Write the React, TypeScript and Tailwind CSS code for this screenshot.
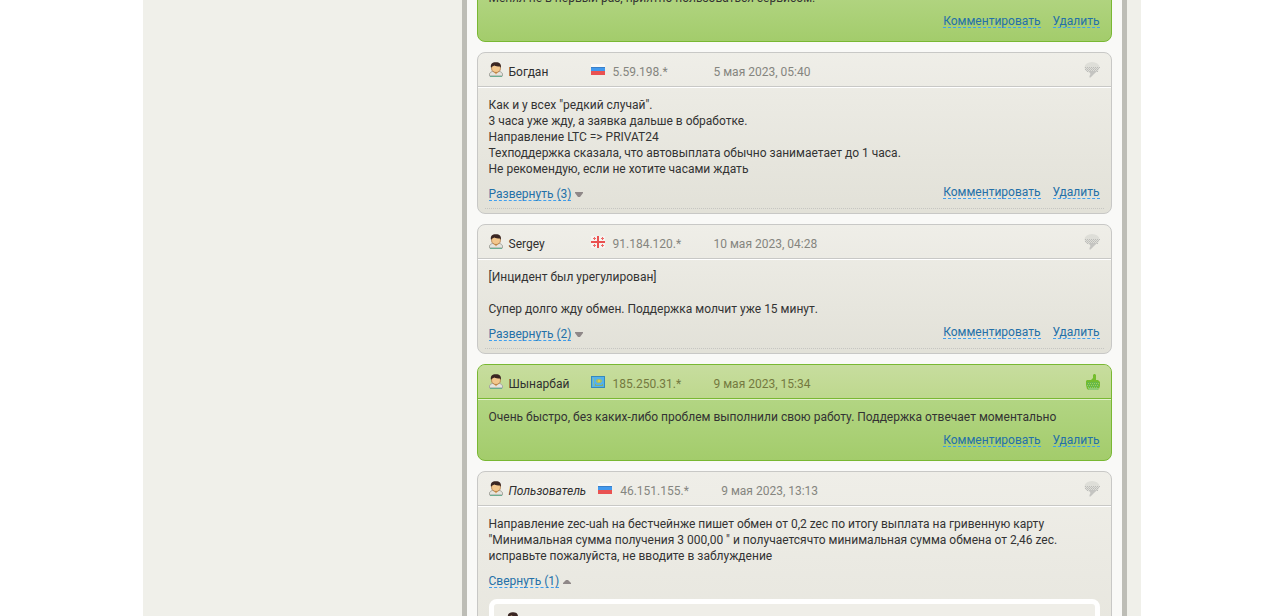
import { useState } from "react";

const reviews = [
  {
    id: 1,
    kind: "neutral",
    name: "Богдан",
    country: "ru",
    ip: "5.59.198.*",
    date: "5 мая 2023, 05:40",
    lines: [
      'Как и у всех "редкий случай".',
      "3 часа уже жду, а заявка дальше в обработке.",
      "Направление LTC => PRIVAT24",
      "Техподдержка сказала, что автовыплата обычно занимаетает до 1 часа.",
      "Не рекомендую, если не хотите часами ждать",
    ],
    replies: 3,
  },
  {
    id: 2,
    kind: "neutral",
    name: "Sergey",
    country: "ge",
    ip: "91.184.120.*",
    date: "10 мая 2023, 04:28",
    lines: ["[Инцидент был урегулирован]", "", "Супер долго жду обмен. Поддержка молчит уже 15 минут."],
    replies: 2,
  },
  {
    id: 3,
    kind: "positive",
    name: "Шынарбай",
    country: "kz",
    ip: "185.250.31.*",
    date: "9 мая 2023, 15:34",
    lines: ["Очень быстро, без каких-либо проблем выполнили свою работу. Поддержка отвечает моментально"],
    replies: 0,
  },
  {
    id: 4,
    kind: "neutral",
    name: "Пользователь",
    anonymous: true,
    country: "ru",
    ip: "46.151.155.*",
    date: "9 мая 2023, 13:13",
    lines: [
      "Направление zec-uah на бестчейнже пишет обмен от 0,2 zec по итогу выплата на гривенную карту",
      '"Минимальная сумма получения 3 000,00 " и получаетсячто минимальная сумма обмена от 2,46 zec.',
      "исправьте пожалуйста, не вводите в заблуждение",
    ],
    replies: 1,
    open: true,
  },
];

const linkClass =
  "h-[15px] cursor-pointer border-b border-dashed border-[#3f9fee] leading-4 text-[#2470a8] hover:border-transparent";

const Avatar = () => (
  <svg width="14" height="15" viewBox="0 0 14 15" className="shrink-0" aria-hidden="true">
    <path d="M.5 14V12C.7 10.4 2.5 9.7 4.2 9.2H9.8C11.5 9.7 13.3 10.4 13.5 12V14Z" fill="#e4e4df" stroke="#a9a9a2" />
    <path d="M1 14.4H13" stroke="#62ab8c" />
    <path d="M4.5 9.5 7 12.5 9.5 9.5 8.8 8H5.2Z" fill="#dda55e" />
    <path d="M2.6 4.5C2.6 2.4 4.4 1.8 7 1.8S11.4 2.4 11.4 4.5V6.8C11.4 9 9.2 10.5 7 10.5S2.6 9 2.6 6.8Z" fill="#f3c88e" stroke="#a66b35" strokeWidth=".7" />
    <path d="M2 5.8C1.2 2 3.4.3 6.6.3c3.4-.2 6 1.3 5.2 5.5L10.8 4.4C8.5 4.4 6.6 4.2 5.4 3.4L3.4 4.4Z" fill="#3a2622" />
  </svg>
);

const Flag = ({ country }: { country: string }) => {
  if (country === "kz") {
    return (
      <svg width="14" height="12" viewBox="0 0 14 12" shapeRendering="crispEdges" role="img" aria-label="Казахстан">
        <path d="M0 0H14V12H0Z" fill="#3489bd" />
        <path d="M1 1H13V11H1Z" fill="#55b2e8" />
        <path d="M2 2H3V10H2Z" fill="#86bfa0" />
        <path d="M6 3H10V4H11V6H10V7H6V6H5V4H6Z" fill="#a0bd70" />
        <path d="M7 4H9V6H7Z" fill="#d7cb4e" />
        <path d="M4 8H5V9H11V8H12V10H4Z" fill="#88b06e" />
      </svg>
    );
  }
  if (country === "ge") {
    return (
      <svg width="14" height="12" viewBox="0 0 14 12" shapeRendering="crispEdges" role="img" aria-label="Грузия">
        <path d="M0 0H14V12H0Z" fill="#f6f3f0" />
        <path d="M6 0H8V12H6ZM0 5H14V7H0Z" fill="#ea5050" />
        <path d="M3 1H4V4H3ZM2 2H5V3H2ZM11 1H12V4H11ZM10 2H13V3H10ZM3 8H4V11H3ZM2 9H5V10H2ZM11 8H12V11H11ZM10 9H13V10H10Z" fill="#ee6a68" />
      </svg>
    );
  }
  return (
    <svg width="14" height="12" viewBox="0 0 14 12" shapeRendering="crispEdges" role="img" aria-label="Россия">
      <path d="M0 0H14V3H0Z" fill="#f8f8f6" />
      <path d="M0 3H14V7H0Z" fill="#4199ee" />
      <path d="M0 3H14V4H0Z" fill="#3a7fc8" />
      <path d="M0 7H14V11H0Z" fill="#e95252" />
    </svg>
  );
};

const NeutralIcon = () => (
  <svg width="16" height="17" viewBox="0 0 16 17" role="img" aria-label="Комментарий">
    <ellipse cx="8" cy="6.5" rx="7.5" ry="5.5" fill="#deded8" />
    <path d="M1 6.5H16M1 8.5H15M3 10.5H14" stroke="#bcbcb9" strokeDasharray="1 1" />
    <path d="M2 7.5H15M2 9.5H14" stroke="#c3c3c0" strokeDasharray="1 1" />
    <path d="M5 10H13L10 13L6.5 16.5H5.5V15L6.5 13Z" fill="#c4c4c1" />
  </svg>
);

const PositiveIcon = () => (
  <svg width="14" height="16" viewBox="0 0 14 16" role="img" aria-label="Положительный отзыв">
    <path d="M1 6H5L7 4V1L8 0H9L10 1V6H12L14 8V12L13 15L11 16H3L1 15L0 11V7Z" fill="#74bd2d" />
    <path d="M1 8.5H13M1 10.5H13M2 12.5H13" stroke="#5bb562" strokeDasharray="1 1" />
    <path d="M2 9.5H13M1 11.5H13M2 13.5H12" stroke="#90cb78" strokeDasharray="1 1" />
    <path d="M2 14H13V15L11 16H3Z" fill="#8fcb74" />
  </svg>
);

const Actions = () => (
  <div className="ml-auto flex gap-3">
    <button className={linkClass}>Комментировать</button>
    <button className={linkClass}>Удалить</button>
  </div>
);

const Review = ({ review }) => {
  const [open, setOpen] = useState(!!review.open);
  const positive = review.kind === "positive";

  return (
    <article
      className={
        positive
          ? "overflow-hidden rounded-lg border border-[#79b833] bg-linear-to-b from-[#bbda90] to-[#a3cc6b]"
          : "overflow-hidden rounded-lg border border-[#c8c8c6] bg-linear-to-b from-[#efeee8] to-[#e2e1d8]"
      }
    >
      <header
        className={
          positive
            ? "flex h-[34px] items-center border-b border-[#79b833] bg-linear-to-b from-[#c7dd9e] to-[#bed88e] px-[11px] text-[#74793f]"
            : "flex h-[34px] items-center border-b border-[#c8c8c6] px-[11px] text-[#85857f]"
        }
      >
        <Avatar />
        <span className={review.anonymous ? "ml-[6px] min-w-[70px] pt-1 text-[#2f2f2f] italic" : "ml-[6px] min-w-[70px] pt-1 text-[#2f2f2f]"}>
          {review.name}
        </span>
        <span className="ml-3">
          <Flag country={review.country} />
        </span>
        <span className="ml-2 min-w-[101px] pt-1">{review.ip}</span>
        <time className="pt-1">{review.date}</time>
        <span className="ml-auto">{positive ? <PositiveIcon /> : <NeutralIcon />}</span>
      </header>

      <div className={positive ? "border-t border-[#e4f2cd] px-[11px] pt-[9px] pb-[13px]" : "border-t border-white px-[11px] pt-[9px] pb-1"}>
        {review.lines.map((line, i) => (
          <p key={i} className="min-h-4">
            {line}
          </p>
        ))}
        <div className="mt-[7px] flex">
          {review.replies > 0 && (
            <button onClick={() => setOpen(!open)} className="mt-[2px] flex cursor-pointer items-center gap-1">
              <span className={linkClass}>{(open ? "Свернуть" : "Развернуть") + " (" + review.replies + ")"}</span>
              <svg width="8" height="5" viewBox="0 0 8 5" className="mt-px" aria-hidden="true">
                <path d={open ? "M0 5V4L3 1H5L8 4V5Z" : "M0 0H8V1L5 5H3L0 1Z"} fill="#8f8888" />
              </svg>
            </button>
          )}
          {!open && <Actions />}
        </div>
        {!positive && !open && <div className="-mx-1 mt-[7px] border-b border-dotted border-[#c6c6c2]" />}
        {open && (
          <div className="mt-[11px] mb-3 min-h-32 rounded-lg border-[5px] border-white bg-[#efeee8] px-3 py-2">
            <Avatar />
          </div>
        )}
      </div>
    </article>
  );
};

export default function App() {
  return (
    <div className="h-screen overflow-hidden bg-white font-['Roboto','Liberation_Sans',sans-serif] text-[12px] leading-4 text-[#333]">
      <div className="mx-auto flex h-full w-full max-w-[998px] bg-[#f0f0ea]">
        <aside className="w-[319px] shrink-0" />
        <main className="mr-[14px] flex flex-1 flex-col gap-[10px] border-x-[5px] border-[#bdbdb6] bg-[#f9f9f7] px-[10px]">
          {/* end of the review that is scrolled off the top */}
          <article className="-mt-5 shrink-0 rounded-b-lg border border-[#79b833] bg-linear-to-b from-[#b6d788] to-[#a3cc6b] px-[11px] pt-[9px] pb-[13px]">
            <p>Менял не в первый раз, приятно пользоваться сервисом!</p>
            <div className="mt-[7px] flex">
              <Actions />
            </div>
          </article>
          {reviews.map((review) => (
            <div key={review.id} className="shrink-0">
              <Review review={review} />
            </div>
          ))}
        </main>
      </div>
    </div>
  );
}
